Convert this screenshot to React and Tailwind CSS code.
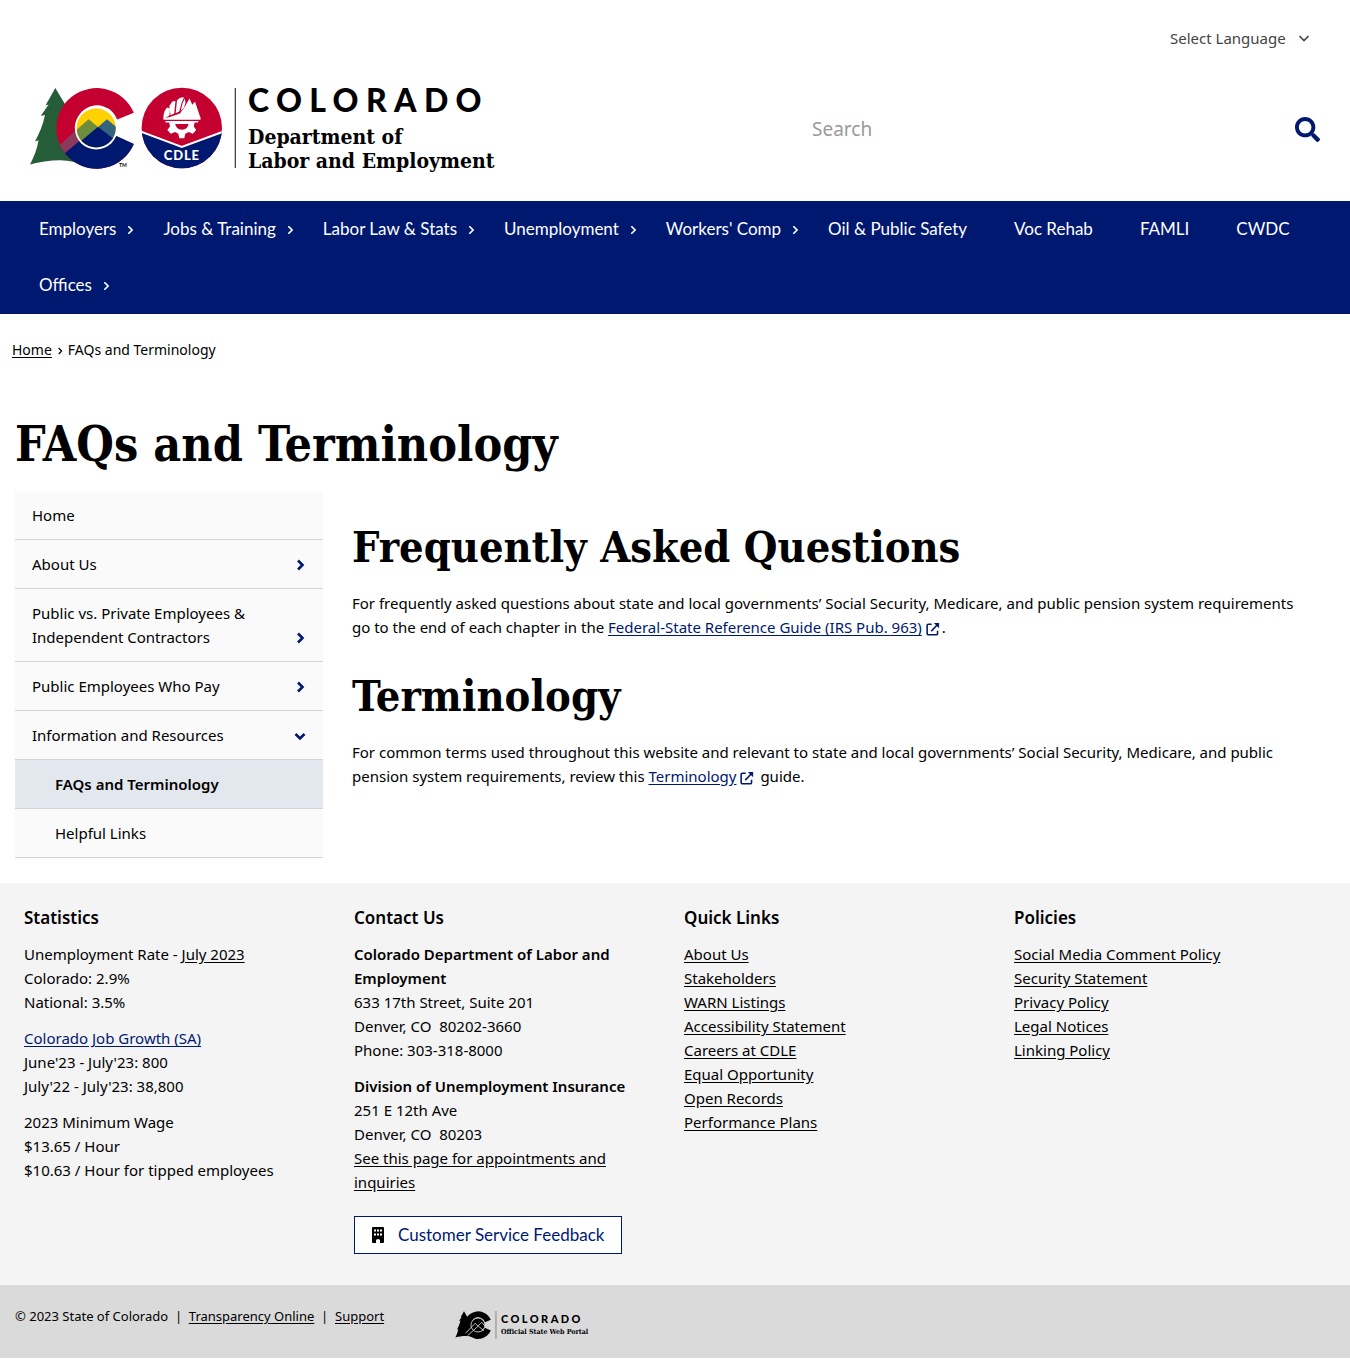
import React from "react";
import { FaSearch } from "react-icons/fa";

const BODY = "font-['Noto_Sans',sans-serif]";
const NAV = "font-['Lato',sans-serif]";
const SLAB = "font-['DejaVu_Serif_Condensed','DejaVu_Serif',serif]";

const NAV_ITEMS = [
  ["Employers", true],
  ["Jobs & Training", true],
  ["Labor Law & Stats", true],
  ["Unemployment", true],
  ["Workers' Comp", true],
  ["Oil & Public Safety", false],
  ["Voc Rehab", false],
  ["FAMLI", false],
  ["CWDC", false],
  ["Offices", true],
];

const SIDE_ITEMS = [
  { label: "Home" },
  { label: "About Us", arrow: "right" },
  { label: "Public vs. Private Employees & Independent Contractors", arrow: "right" },
  { label: "Public Employees Who Pay", arrow: "right" },
  { label: "Information and Resources", arrow: "down" },
  { label: "FAQs and Terminology", sub: true, active: true },
  { label: "Helpful Links", sub: true },
];

const QUICK_LINKS = [
  "About Us",
  "Stakeholders",
  "WARN Listings",
  "Accessibility Statement",
  "Careers at CDLE",
  "Equal Opportunity",
  "Open Records",
  "Performance Plans",
];

const POLICIES = [
  "Social Media Comment Policy",
  "Security Statement",
  "Privacy Policy",
  "Legal Notices",
  "Linking Policy",
];

function Chevron({ className, down = false, weight = 2 }) {
  return (
    <svg viewBox="0 0 12 12" className={className} fill="none" stroke="currentColor" strokeWidth={weight} aria-hidden="true">
      {down ? <path d="M1.5 4 L6 8.5 L10.5 4" /> : <path d="M4 1.5 L8.5 6 L4 10.5" />}
    </svg>
  );
}

function ExternalIcon() {
  return (
    <svg viewBox="0 0 16 16" className="mr-0.5 ml-1 inline-block size-3.5 align-[-3px] text-[#001970]" fill="none" stroke="currentColor" strokeWidth="1.8" aria-hidden="true">
      <path d="M6.5 2.5 H2.8 Q1.3 2.5 1.3 4 V13 Q1.3 14.6 2.8 14.6 H11.6 Q13.2 14.6 13.2 13 V10" />
      <path d="M6 10.4 L12.8 3.4" />
      <path d="M9 1 H15 V7 Z" fill="currentColor" stroke="none" />
    </svg>
  );
}

const TREE =
  "M25.3 1 L15.5 18.6 L18.6 17.6 L10.7 29 L15 28 C13 38 9 47 5 54.5 L8.6 53.2 C7 62 4 70 0 77.4 C10 75 22 73 33 73.4 C39 73.6 44 75 49 76 L60 40 L40 16 L32.5 17.5 L35.5 18 Z";
const C_SHAPE = "M103.8 25.8 A40.3 40.3 0 1 0 103.8 57 L86.3 48.9 A21.3 21.3 0 1 1 87.2 32.6 Z";

function StateLogo() {
  return (
    <svg viewBox="0 0 206 86" className="h-[86px] w-[206px] shrink-0" aria-hidden="true">
      <defs>
        <clipPath id="logo-c">
          <path d={C_SHAPE} />
        </clipPath>
        <clipPath id="logo-sun">
          <circle cx="66.2" cy="41" r="19.6" />
        </clipPath>
        <clipPath id="logo-badge">
          <circle cx="151.8" cy="41" r="40.2" />
        </clipPath>
      </defs>
      <path d={TREE} fill="#245d38" />
      <g clipPath="url(#logo-c)">
        <rect x="20" y="0" width="90" height="86" fill="#c3002f" />
        <path d="M24 63.5 L46 43 L54 54 L36 72 Z" fill="#8b3a5e" />
        <path d="M32 68.5 L50 53.5 L56 47 L110 47 V86 H30 Z" fill="#001970" />
      </g>
      <circle cx="66.2" cy="41" r="21.4" fill="#fff" />
      <g clipPath="url(#logo-sun)">
        <rect x="44" y="18" width="46" height="46" fill="#ffd100" />
        <path d="M44 45 L58.7 32.2 L68 40 L46 60 Z" fill="#6d8c3c" />
        <path d="M68 40 L77 32.2 L90 43 V60 Z" fill="#35647e" />
        <path d="M45 59 L68 39.8 L90 57 V64 H45 Z" fill="#001970" />
      </g>
      <text x="89" y="80" fontSize="5" fontWeight="700" fontFamily="Lato, sans-serif">TM</text>

      <g clipPath="url(#logo-badge)">
        <rect x="111" y="0" width="82" height="82" fill="#c3002f" />
        <path d="M111 44.8 L151.8 60 L193 44.8 V82 H111 Z" fill="#001970" />
        <path d="M111 44.8 L151.8 60 L193 44.8" fill="none" stroke="#fff" strokeWidth="2" />
      </g>
      <g fill="#fff">
        <path d="M133.5 31.3 Q133 25 137 20.5 L140 21.5 L139.5 28.5 L134.5 31.3 Z" />
        <path d="M139.3 19 L142.3 14.4 L145.5 14 L144.2 26.5 L140.6 28.3 Z" />
        <path d="M147 13.2 Q150 9.8 154 10.4 L151.8 15.2 L149.2 24.5 L145.7 26.3 Z" />
        <path d="M154.8 11.5 L155.5 15.8 L154 20.5 L150.6 24 L152.6 16.2 Z" />
        <path d="M137 31 L150 26.4 L155 19.5 L159.5 11.5 L162.3 17.8 L165 14.8 L167.5 22 L170.5 31 Z" />
        <path d="M133.5 30.5 H170.5 V32.8 H133.5 Z" />
        <path d="M135.5 35.6 H139.2 L140 39.5 L137.3 43 L140.8 46.8 L145 44.9 L148.3 46.7 L149.3 51.3 H154.3 L155.3 46.7 L158.6 44.9 L162.8 46.8 L166.2 43 L163.8 39.5 L164.6 35.6 H168.2 V34 H135.5 Z" />
      </g>
      <path d="M145.2 37 A6.8 6.8 0 0 0 158.6 37 Z" fill="#c3002f" />
      <text x="151.8" y="73" textAnchor="middle" fontSize="13" fontWeight="900" fill="#fff" letterSpacing="0.8" fontFamily="Lato, sans-serif">CDLE</text>
      <path d="M205.3 1 V81" stroke="#333" strokeWidth="1.2" />
    </svg>
  );
}

function PortalLogo() {
  return (
    <svg viewBox="0 0 121 82" className="h-7 w-[42px] shrink-0" aria-hidden="true">
      <path d={TREE} />
      <path d={C_SHAPE} />
      <circle cx="66.2" cy="41" r="20.5" stroke="#dadada" strokeWidth="2.5" />
      <path d="M30 65 L58 36 L66 44 L77 33 L86 43 M36 72 L67 44 L84 58" fill="none" stroke="#dadada" strokeWidth="2.5" />
      <path d="M119 0 V82" stroke="#888" strokeWidth="3" />
    </svg>
  );
}

function BuildingIcon() {
  return (
    <svg viewBox="0 0 12 16" className="h-4 w-3 text-black" aria-hidden="true">
      <path
        fill="currentColor"
        fillRule="evenodd"
        d="M1 0 H11 Q12 0 12 1 V15 Q12 16 11 16 H8 V13.5 Q8 12 6 12 Q4 12 4 13.5 V16 H1 Q0 16 0 15 V1 Q0 0 1 0 Z M2 2.5 V4.5 H4 V2.5 Z M5 2.5 V4.5 H7 V2.5 Z M8 2.5 V4.5 H10 V2.5 Z M2 6.5 V8.5 H4 V6.5 Z M5 6.5 V8.5 H7 V6.5 Z M8 6.5 V8.5 H10 V6.5 Z"
      />
    </svg>
  );
}

function Link({ children, className = "" }) {
  return (
    <a href="#" className={`underline underline-offset-2 ${className}`}>
      {children}
    </a>
  );
}

function FooterColumn({ title, children }) {
  return (
    <section className="pr-6 pl-[9px]">
      <h2 className="mb-3 text-[17px] leading-6 font-semibold">{title}</h2>
      {children}
    </section>
  );
}

function LinkList({ items }) {
  return (
    <ul>
      {items.map((item) => (
        <li key={item}>
          <Link>{item}</Link>
        </li>
      ))}
    </ul>
  );
}

export default function App() {
  return (
    <div className={`${BODY} bg-white text-[15px] leading-6 text-black`}>
      <header>
        <div className="flex justify-end pt-6 pr-10">
          <div className="relative">
            <select aria-label="Select Language" className="h-7 w-[140px] appearance-none bg-transparent text-[15px] text-[#444]">
              <option>Select Language</option>
            </select>
            <Chevron down weight={1.6} className="pointer-events-none absolute top-2 right-0 size-3 text-[#444]" />
          </div>
        </div>
        <div className="flex items-start justify-between px-[30px] pt-[35px] pb-7">
          <a href="#" className="flex" aria-label="Colorado Department of Labor and Employment">
            <StateLogo />
            <span className="ml-3 flex flex-col">
              <span className={`${NAV} text-[32px] leading-[26px] font-black tracking-[0.23em]`}>COLORADO</span>
              <span className={`${SLAB} mt-3 text-[21px] leading-6 font-bold whitespace-nowrap`}>
                Department of
                <br />
                Labor and Employment
              </span>
            </span>
          </a>
          <form className="flex w-[508px] items-center pt-6" onSubmit={(e) => e.preventDefault()}>
            <input aria-label="Search" placeholder="Search" className="h-9 min-w-0 flex-1 text-[19px] outline-none placeholder:text-[#999]" />
            <button aria-label="Submit search" className="text-[#001970]">
              <FaSearch size={25} />
            </button>
          </form>
        </div>
      </header>

      <nav className={`${NAV} bg-[#001970] pb-px text-[17px] text-white`}>
        <ul className="flex flex-wrap gap-x-[47px] pr-6 pl-[39px]">
          {NAV_ITEMS.map(([label, menu]) => (
            <li key={label} className="relative">
              <a href="#" className="block leading-[56px]">
                {label}
                {menu && <Chevron className="absolute top-6 left-[calc(100%+9px)] size-2.5" />}
              </a>
            </li>
          ))}
        </ul>
      </nav>

      <nav aria-label="Breadcrumb" className="flex items-center px-3 pt-6 text-sm leading-6">
        <Link>Home</Link>
        <Chevron weight={1.8} className="mx-1 mt-0.5 size-2" />
        <span>FAQs and Terminology</span>
      </nav>

      <main className="px-[15px] pb-[25px]">
        <h1 className={`${SLAB} pt-[54px] pb-[19px] text-[48px] leading-[56px] font-bold`}>FAQs and Terminology</h1>
        <div className="flex gap-[29px]">
          <aside className="w-[308px] shrink-0">
            <ul>
              {SIDE_ITEMS.map((item) => (
                <li key={item.label} className="border-b border-[#d4d4d4]">
                  <a
                    href="#"
                    className={`flex items-end justify-between py-3 pr-4 ${item.sub ? "pl-10" : "pl-[17px]"} ${
                      item.active ? "bg-[#e3e7ee] font-semibold" : "bg-[#fafafa]"
                    }`}
                  >
                    <span className="max-w-[230px]">{item.label}</span>
                    {item.arrow && (
                      <Chevron down={item.arrow === "down"} weight={2.6} className="mr-px mb-[5px] size-3 text-[#001970]" />
                    )}
                  </a>
                </li>
              ))}
            </ul>
          </aside>
          <article className="min-w-0 flex-1 pt-[28px] pr-6">
            <h2 className={`${SLAB} mb-4 text-[43px] leading-[56px] font-bold`}>Frequently Asked Questions</h2>
            <p>
              For frequently asked questions about state and local governments’ Social Security, Medicare, and public
              pension system requirements go to the end of each chapter in the{" "}
              <Link className="text-[#001970]">Federal-State Reference Guide (IRS Pub. 963)</Link>
              <ExternalIcon />.
            </p>
            <h2 className={`${SLAB} mt-[29px] mb-4 text-[43px] leading-[56px] font-bold`}>Terminology</h2>
            <p>
              For common terms used throughout this website and relevant to state and local governments’ Social
              Security, Medicare, and public pension system requirements, review this{" "}
              <Link className="text-[#001970]">Terminology</Link>
              <ExternalIcon /> guide.
            </p>
          </article>
        </div>
      </main>

      <footer>
        <div className="bg-[#f4f4f4] px-[15px] pt-[23px] pb-[31px]">
          <div className="grid grid-cols-4">
            <FooterColumn title="Statistics">
              <div className="space-y-3">
                <p>
                  Unemployment Rate - <Link>July 2023</Link>
                  <br />
                  Colorado: 2.9%
                  <br />
                  National: 3.5%
                </p>
                <p>
                  <Link className="text-[#001970]">Colorado Job Growth (SA)</Link>
                  <br />
                  June'23 - July'23: 800
                  <br />
                  July'22 - July'23: 38,800
                </p>
                <p>
                  2023 Minimum Wage
                  <br />
                  $13.65 / Hour
                  <br />
                  $10.63 / Hour for tipped employees
                </p>
              </div>
            </FooterColumn>
            <FooterColumn title="Contact Us">
              <div className="space-y-3">
                <p>
                  <strong className="font-semibold">Colorado Department of Labor and Employment</strong>
                  <br />
                  633 17th Street, Suite 201
                  <br />
                  Denver, CO&nbsp; 80202-3660
                  <br />
                  Phone: 303-318-8000
                </p>
                <p>
                  <strong className="font-semibold">Division of Unemployment Insurance</strong>
                  <br />
                  251 E 12th Ave
                  <br />
                  Denver, CO&nbsp; 80203
                  <br />
                  <Link>See this page for appointments and inquiries</Link>
                </p>
              </div>
              <a
                href="#"
                className={`${NAV} mt-[22px] inline-flex h-[38px] items-center gap-3.5 border border-[#001970] bg-white px-[17px] text-[17px] whitespace-nowrap text-[#001970]`}
              >
                <BuildingIcon />
                Customer Service Feedback
              </a>
            </FooterColumn>
            <FooterColumn title="Quick Links">
              <LinkList items={QUICK_LINKS} />
            </FooterColumn>
            <FooterColumn title="Policies">
              <LinkList items={POLICIES} />
            </FooterColumn>
          </div>
        </div>
        <div className="flex items-start bg-[#dadada] px-[15px] py-[19px]">
          <p className="w-[440px] text-[13px] leading-6">
            © 2023 State of Colorado &nbsp;|&nbsp; <Link>Transparency Online</Link> &nbsp;|&nbsp; <Link>Support</Link>
          </p>
          <a href="#" className="mt-[7px] flex" aria-label="Colorado Official State Web Portal">
            <PortalLogo />
            <span className="ml-1 flex flex-col">
              <span className={`${NAV} mt-0.5 text-[11px] leading-3 font-black tracking-[0.22em]`}>COLORADO</span>
              <span className={`${SLAB} mt-0.5 text-[7px] leading-[10px] font-bold whitespace-nowrap`}>Official State Web Portal</span>
            </span>
          </a>
        </div>
      </footer>
    </div>
  );
}
